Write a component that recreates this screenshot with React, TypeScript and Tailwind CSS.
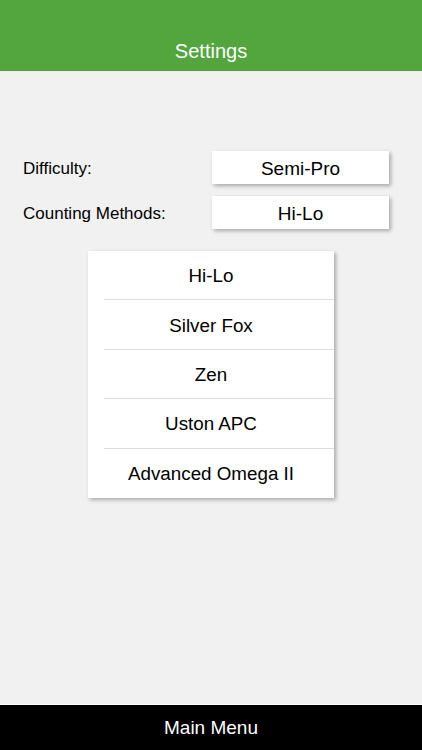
import React from "react";

const methods = ["Hi-Lo", "Silver Fox", "Zen", "Uston APC", "Advanced Omega II"];

export default function App() {
  return (
    <div
      className="w-[422px] h-[750px] flex flex-col bg-[#f1f1f1] text-black overflow-hidden"
      style={{ fontFamily: '"Liberation Sans", Arial, sans-serif' }}
    >
      <header className="h-[72px] bg-[#53a63e] flex items-end justify-center border-b border-[#e8f0e4]">
        <div className="h-[45px] pt-[4px] flex items-center text-white text-[20px] leading-none">Settings</div>
      </header>

      <main className="flex-1 flex flex-col pt-[79px]">
        <div className="flex flex-col gap-[12px]">
          <div className="flex items-center">
            <div className="w-[212px] pl-[23px] text-[17px] leading-none pt-[2px]">Difficulty:</div>
            <div className="w-[177px] h-[33px] bg-white shadow-[2px_2px_4px_rgba(0,0,0,0.3)] flex items-center justify-center text-[19px] leading-none pt-[2px]">
              Semi-Pro
            </div>
          </div>
          <div className="flex items-center">
            <div className="w-[212px] pl-[23px] text-[17px] leading-none pt-[2px]">Counting Methods:</div>
            <div className="w-[177px] h-[33px] bg-white shadow-[2px_2px_4px_rgba(0,0,0,0.3)] flex items-center justify-center text-[19px] leading-none pt-[2px]">
              Hi-Lo
            </div>
          </div>
        </div>

        <div className="ml-[88px] mt-[22px] w-[246px] bg-white shadow-[2px_2px_4px_rgba(0,0,0,0.3)] flex flex-col">
          {methods.map((m, i) => (
            <div key={m} className="relative h-[49.4px] flex items-center justify-center text-[18.8px] leading-none">
              <span className="pt-[2px]">{m}</span>
              {i < methods.length - 1 && (
                <div className="absolute left-[16px] right-0 bottom-0 h-px bg-[#dedede]" />
              )}
            </div>
          ))}
        </div>
      </main>

      <footer className="h-[46px] bg-black border-t border-white flex items-center justify-center text-white text-[19px] leading-none">
        Main Menu
      </footer>
    </div>
  );
}
